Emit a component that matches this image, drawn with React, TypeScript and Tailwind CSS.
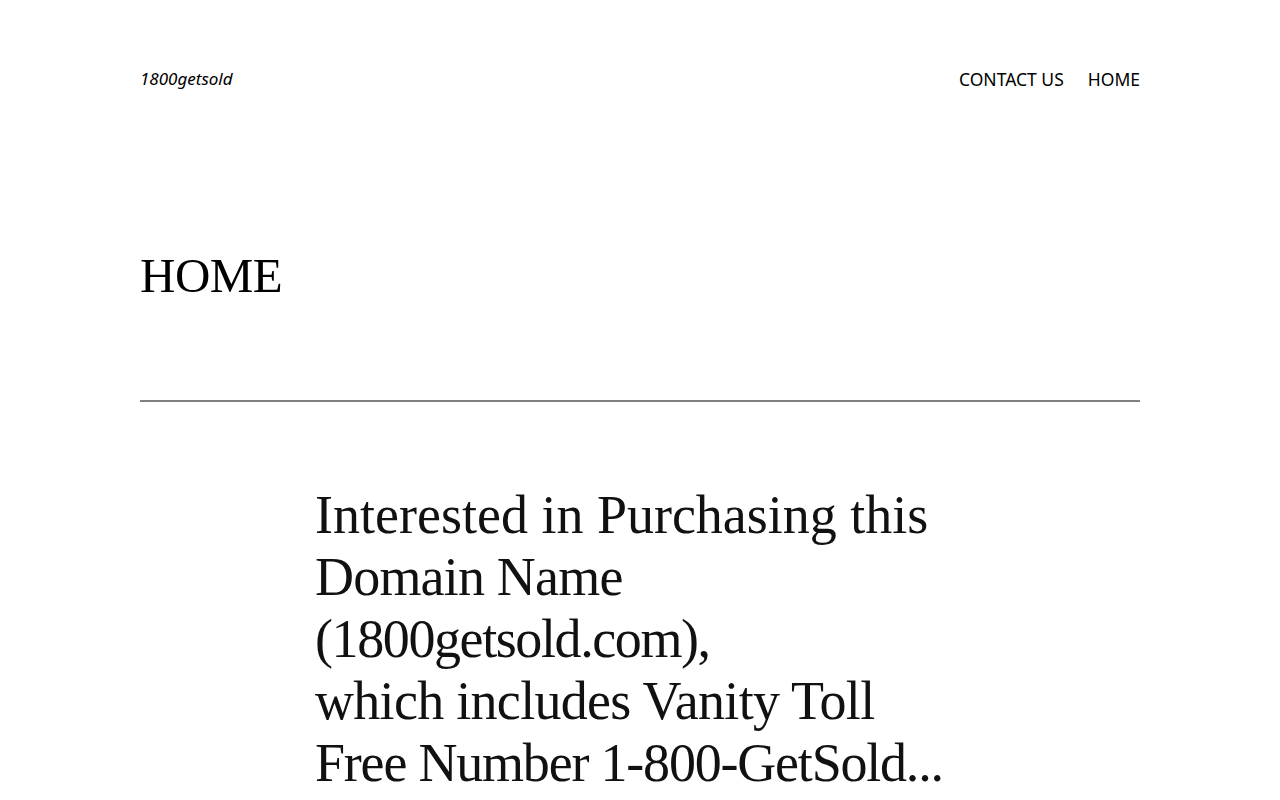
export default function App() {
  return (
    <div className="min-h-screen bg-white text-black">
      <header className="mx-auto flex w-[1000px] items-center justify-between pt-[67px]">
        <a className="font-['Noto_Sans','Open_Sans',sans-serif] text-[17px] italic leading-[24px] text-black">
          1800getsold
        </a>
        <nav className="flex gap-[24px] font-['Noto_Sans','Open_Sans',sans-serif] text-[17.5px] leading-[24px]">
          <a className="text-black">CONTACT US</a>
          <a className="text-black">HOME</a>
        </nav>
      </header>
      <main className="mx-auto w-[1000px]">
        <h1 className="mt-[155px] font-['Liberation_Serif',serif] text-[49px] font-normal leading-[60px] tracking-[-0.5px]">
          HOME
        </h1>
        <div className="mt-[94px] h-[2px] w-full bg-[#808080]" />
        <div className="mx-auto mt-[82px] w-[650px] font-['Liberation_Serif',serif] text-[54px] leading-[62px] whitespace-nowrap text-[#111]">
          <p>
            <span className="block">Interested in Purchasing this</span>
            <span className="block tracking-[-0.8px]">Domain Name</span>
            <span className="block tracking-[-1.4px]">(1800getsold.com),</span>
            <span className="block tracking-[-0.7px]">which includes Vanity Toll</span>
            <span className="block tracking-[-1.2px]">Free Number 1-800-GetSold...</span>
          </p>
        </div>
      </main>
    </div>
  );
}
